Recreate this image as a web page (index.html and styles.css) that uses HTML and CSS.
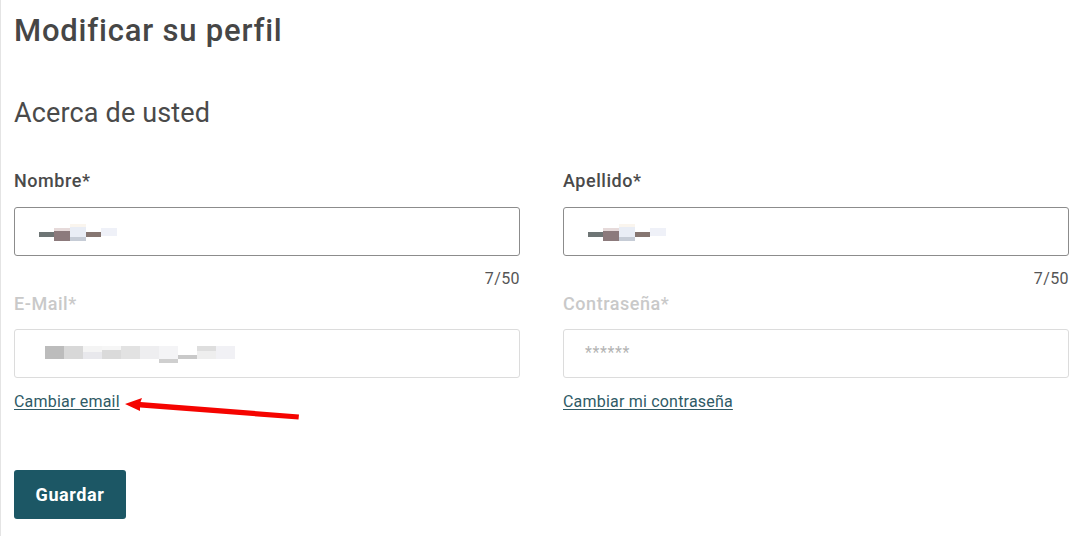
FILE: index.html
```html
<!DOCTYPE html>
<html lang="es">
<head>
<meta charset="utf-8">
<title>Modificar su perfil</title>
<link rel="stylesheet" href="styles.css">
</head>
<body>
<div class="page">
  <h1 class="title">Modificar su perfil</h1>
  <h2 class="section">Acerca de usted</h2>
  <form class="form">
    <div class="grid">
      <div class="field">
        <label class="label">Nombre*</label>
        <div class="input">
          <span class="redact r-name">
            <i class="p p1"></i><i class="p p2"></i><i class="p p3"></i><i class="p p4"></i><i class="p p5"></i>
          </span>
        </div>
        <div class="counter">7/50</div>
      </div>
      <div class="field">
        <label class="label">Apellido*</label>
        <div class="input">
          <span class="redact r-name">
            <i class="p p1"></i><i class="p p2"></i><i class="p p3"></i><i class="p p4"></i><i class="p p5"></i>
          </span>
        </div>
        <div class="counter">7/50</div>
      </div>
      <div class="field">
        <label class="label disabled">E-Mail*</label>
        <div class="input input-disabled">
          <span class="redact r-mail">
            <i class="m m1"></i><i class="m m2"></i><i class="m m3"></i><i class="m m4"></i><i class="m m5"></i><i class="m m6"></i><i class="m m7"></i><i class="m m8"></i><i class="m m9"></i><i class="m m10"></i>
          </span>
        </div>
        <div class="link-row">
          <a class="link" href="#">Cambiar email</a>
          <svg class="arrow" width="180" height="26" viewBox="0 0 180 26">
            <polygon points="0,6 17,0 15.5,4 174,16.5 173.5,21.5 15,9.5 15,13" fill="#f50400"/>
          </svg>
        </div>
      </div>
      <div class="field">
        <label class="label disabled">Contraseña*</label>
        <div class="input input-disabled">
          <span class="stars">******</span>
        </div>
        <div class="link-row">
          <a class="link" href="#">Cambiar mi contraseña</a>
        </div>
      </div>
    </div>
    <button class="btn" type="button">Guardar</button>
  </form>
</div>
</body>
</html>
```

FILE: styles.css
```css
html, body {
  margin: 0;
  padding: 0;
  background: #ffffff;
}

body {
  font-family: Roboto, "Liberation Sans", Arial, sans-serif;
  color: #444444;
}

.page {
  min-height: 536px;
  box-sizing: border-box;
  border-left: 1px solid #e4e4e4;
  padding: 11px 19px 0 13px;
}

.title {
  margin: 0;
  font-size: 31px;
  line-height: 40px;
  font-weight: 500;
  letter-spacing: 0.8px;
  color: #464646;
}

.section {
  margin: 46px 0 0;
  font-size: 27px;
  line-height: 32px;
  font-weight: 400;
  letter-spacing: 0.15px;
  color: #4a4a4a;
}

.form {
  margin-top: 41px;
}

.grid {
  display: grid;
  grid-template-columns: 506px 506px;
  column-gap: 43px;
}

.field {
  display: flex;
  flex-direction: column;
  align-items: flex-start;
}

.label {
  font-size: 18px;
  line-height: 22px;
  font-weight: 500;
  letter-spacing: 0.55px;
  color: #4a4a4a;
}

.label.disabled {
  color: #c9c9c9;
}

.input {
  margin-top: 15px;
  align-self: stretch;
  box-sizing: border-box;
  height: 49px;
  border: 1px solid #8c8c8c;
  border-radius: 3px;
  display: flex;
  align-items: center;
  padding-left: 24px;
}

.input-disabled {
  margin-top: 14px;
  border-color: #dcdcdc;
}

.counter {
  align-self: flex-end;
  margin-top: 13px;
  margin-bottom: 4px;
  font-size: 16px;
  line-height: 20px;
  letter-spacing: 0.4px;
  color: #555555;
}

.redact {
  display: flex;
  align-items: flex-start;
}

.r-name {
  height: 17px;
  margin-top: 2px;
}

.p {
  display: block;
  width: 15px;
}

.p1 { height: 5px; margin-top: 8px; background: #6e7575; }
.p2 { height: 13px; margin-top: 4px; width: 16px; background: linear-gradient(#e6dada 0 25%, #8c7a7c 25% 100%); }
.p3 { height: 17px; width: 16px; background: linear-gradient(#faf5ee 0 20%, #e9edf5 20% 75%, #c6ccd6 75% 100%); }
.p4 { height: 5px; margin-top: 8px; background: #867671; }
.p5 { height: 8px; margin-top: 4px; width: 16px; background: #eff1f8; }

.r-mail {
  margin-left: 6px;
  height: 17px;
  margin-top: 2px;
}

.m {
  display: block;
  width: 19px;
  height: 13px;
}

.m1 { background: #bcbcbc; }
.m2 { background: #d8d8d8; }
.m3 { background: linear-gradient(#f4f4f4 0 45%, #e8e8ec 45%); }
.m4 { background: linear-gradient(#f6f6f6 0 30%, #dadada 30%); }
.m5 { background: #e2e2e2; }
.m6 { background: #eeeef0; }
.m7 { height: 17px; background: linear-gradient(#f4f4f6 0 75%, #cfcfcf 75%); }
.m8 { background: linear-gradient(#ffffff 0 70%, #c9c9c9 70%); }
.m9 { background: linear-gradient(#dedede 0 40%, #eeeeee 40%); }
.m10 { background: #f1f1f5; }

.stars {
  font-size: 16px;
  color: #b4b4b4;
  letter-spacing: 0.6px;
  margin-left: -3px;
  margin-top: -2px;
}

.link-row {
  position: relative;
  margin-top: 15px;
  line-height: 18px;
}

.link {
  font-size: 16px;
  line-height: 18px;
  letter-spacing: 0.2px;
  color: #2f5a66;
  text-decoration: underline;
  text-underline-offset: 2px;
}

.arrow {
  position: absolute;
  left: 111px;
  top: 5px;
}

.btn {
  margin-top: 59px;
  width: 112px;
  height: 49px;
  border: none;
  border-radius: 3px;
  background: #1c5765;
  color: #ffffff;
  font-family: Roboto, "Liberation Sans", Arial, sans-serif;
  font-size: 18px;
  font-weight: 700;
  letter-spacing: 0.6px;
  cursor: pointer;
}
```
